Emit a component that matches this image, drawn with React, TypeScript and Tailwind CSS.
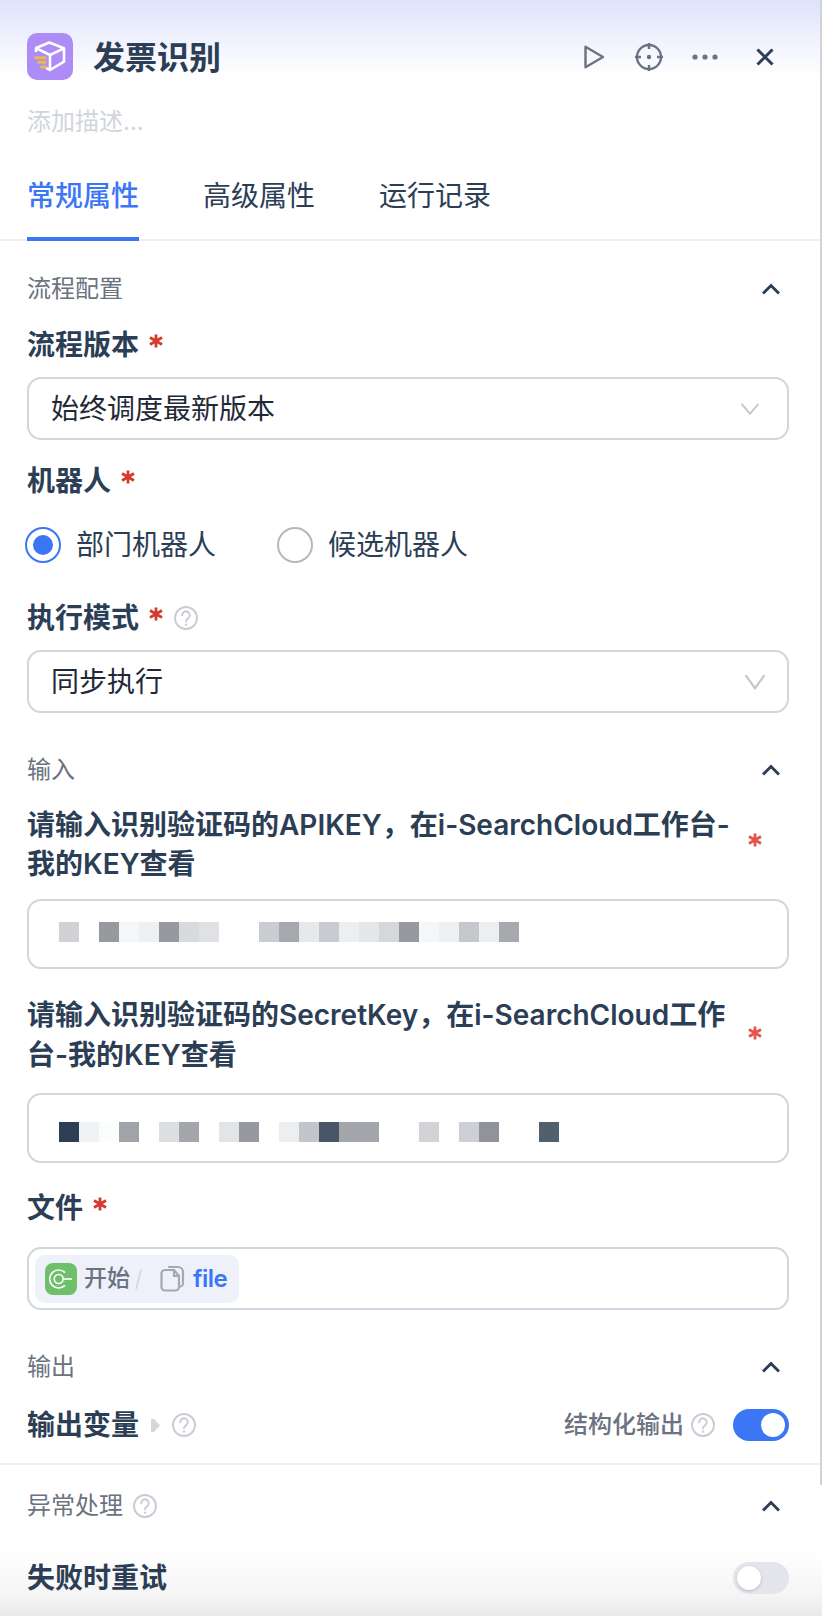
import React from 'react';

const line1 = [
  'bg-[#d0d2d6]', '', 'bg-[#96999e]', 'bg-[#f5f6f7]', 'bg-[#eff0f2]', 'bg-[#97999e]', 'bg-[#d8dadd]', 'bg-[#dfe1e4]', '', '',
  'bg-[#c9ccd0]', 'bg-[#a5a9ae]', 'bg-[#e6e8ea]', 'bg-[#c8cbcf]', 'bg-[#eceef0]', 'bg-[#e4e6e8]', 'bg-[#d5d7da]', 'bg-[#95989f]',
  'bg-[#f5f6f7]', 'bg-[#eff0f1]', 'bg-[#c4c7cb]', 'bg-[#eceef0]', 'bg-[#a6a9ae]',
];

const line2 = [
  'bg-[#2c3e55]', 'bg-[#f1f2f4]', 'bg-[#fcfdfd]', 'bg-[#a0a3a8]', '', 'bg-[#dcdee1]', 'bg-[#a3a6ab]', '', 'bg-[#e2e4e6]', 'bg-[#96999f]', '',
  'bg-[#eceef0]', 'bg-[#c2c5ca]', 'bg-[#4a5568]', 'bg-[#a3a6ab]', 'bg-[#a3a6ab]', '', '', 'bg-[#d1d3d6]', '', 'bg-[#cccfd3]', 'bg-[#90939a]', '', '',
  'bg-[#525f6d]',
];

const Help = ({ className = 'w-6 h-6' }: { className?: string }) => (
  <svg viewBox="0 0 24 24" fill="none" stroke="#c9ccd4" strokeWidth="1.9" className={className}>
    <circle cx="12" cy="12" r="11" />
    <path d="M8.200 9.200a3.800 3.800 0 1 1 5.800 3.200c-1.300.8-2 1.500-2 2.900" strokeLinecap="round" />
    <circle cx="12" cy="18.600" r="1.200" fill="#c9ccd4" stroke="none" />
  </svg>
);

const ChevronUp = () => (
  <svg viewBox="0 0 18 12" fill="none" stroke="#2c3e55" strokeWidth="3" className="w-[18px] h-3 mr-[9px]">
    <path d="M1 10.500 9 2.500l8 8" />
  </svg>
);

const Star = ({ className = 'ml-[10px] -translate-y-1' }: { className?: string }) => (
  <svg viewBox="0 0 14 14" fill="none" stroke="#d5392b" strokeWidth="2.800" className={`w-[14px] h-[14px] ${className}`}>
    <path d="M7 0.500v13M1 3.500l12 7M13 3.500l-12 7" />
  </svg>
);

const SectionHeader = ({ title, help, className }: { title: string; help?: boolean; className: string }) => (
  <div className={`h-10 flex items-center justify-between ${className}`}>
    <div className="flex items-center gap-[10px] text-[24px] text-[#6b7280]">
      {title}
      {help && <Help />}
    </div>
    <ChevronUp />
  </div>
);

const Label = ({ text, className, children }: { text: string; className: string; children?: React.ReactNode }) => (
  <div className={`h-10 flex items-center text-[28px] font-semibold text-[#2c3e55] ${className}`}>
    {text}
    {children}
  </div>
);

const Select = ({ value, wide }: { value: string; wide?: boolean }) => (
  <div className={`mt-3 h-[63px] rounded-[14px] border-2 border-[#d0d5e0] flex items-center justify-between pl-[22px] ${wide ? 'pr-[22px]' : 'pr-[28px]'}`}>
    <span className="text-[28px] text-[#1f2937]">{value}</span>
    <svg viewBox="0 0 18 14" fill="none" stroke="#c4c8d0" strokeWidth="2" className={wide ? 'w-5 h-4' : 'w-[18px] h-3'} preserveAspectRatio="none">
      <path d="M0.500 1 9 12.500 17.500 1" />
    </svg>
  </div>
);

const Masked = ({ cells, className }: { cells: string[]; className: string }) => (
  <div className={`h-[70px] rounded-[14px] border-2 border-[#d0d5e0] pl-[30px] flex ${className}`}>
    {cells.map((c, i) => (
      <div key={i} className={`w-5 h-5 ${c}`}></div>
    ))}
  </div>
);

const Radio = ({ checked, label }: { checked?: boolean; label: string }) => (
  <div className="flex items-center gap-[15px]">
    <div className={`w-9 h-9 rounded-full border-2 flex items-center justify-center ${checked ? 'border-[#3b76f6]' : 'border-[#b4b8c0]'}`}>
      {checked && <div className="w-5 h-5 rounded-full bg-[#3b76f6]"></div>}
    </div>
    <span className="text-[28px] text-[#2c3e55]">{label}</span>
  </div>
);

export default function App() {
  return (
    <div className="relative w-[822px] h-[1616px] overflow-hidden bg-[linear-gradient(180deg,#dfe3fb_0,#ffffff_76px,#ffffff_1550px,#f5f5f5_1595px,#e9e9e9_1616px)] font-['Inter','Noto_Sans_CJK_SC',sans-serif]">
      <div className="absolute top-0 right-0 w-[2px] h-[1485px] bg-[#d2d2d4]"></div>

      <div className="px-[27px] pt-[33px]">
        <div className="h-[47px] flex items-center">
          <svg viewBox="0 0 46 47" fill="none" className="w-[46px] h-[47px]">
            <rect width="46" height="47" rx="10" fill="#ad8cf7" />
            <path d="M9 19v-4L22.300 9.500 37 15.300v13.400L23 37l-4-2.200M9 15.200 23 22l14-6.700M23 22v15" stroke="#fff" strokeWidth="2.600" strokeLinejoin="round" />
            <path d="M7.500 24.700h12M10.500 29.300h9M13.500 34h6" stroke="#eab84e" strokeWidth="3" />
          </svg>
          <span className="ml-[20px] mt-[3px] text-[32px] font-bold text-[#2c3e55]">发票识别</span>
          <div className="ml-auto flex items-center">
            <svg viewBox="0 0 21 24" fill="none" stroke="#6b7280" strokeWidth="2.400" className="w-[21px] h-[24px]">
              <path d="M1.500 1.800v20.400L19 12z" strokeLinejoin="round" />
            </svg>
            <svg viewBox="0 0 28 28" fill="none" stroke="#6b7280" strokeWidth="2.400" className="ml-[30px] w-[28px] h-[28px]">
              <circle cx="14" cy="14" r="12" />
              <path d="M14 0v6M14 22v6M0 14h6M22 14h6" />
              <circle cx="14" cy="14" r="2.200" fill="#6b7280" stroke="none" />
            </svg>
            <svg viewBox="0 0 26 6" fill="#6b7280" className="ml-[29px] w-[26px] h-[6px]">
              <circle cx="3" cy="3" r="2.600" />
              <circle cx="13" cy="3" r="2.600" />
              <circle cx="23" cy="3" r="2.600" />
            </svg>
            <svg viewBox="0 0 18 18" fill="none" stroke="#2c3e55" strokeWidth="3" className="ml-[38px] mr-[21px] w-[18px] h-[18px]">
              <path d="M1.500 1.500l15 15M16.500 1.500l-15 15" />
            </svg>
          </div>
        </div>
        <div className="mt-[26px] h-8 -mb-[2px] flex items-center text-[24px] text-[#d1d5db]">添加描述...</div>
      </div>

      <div className="h-[105px] border-b-2 border-[#f0f0f0] px-[27px] flex items-end gap-[64px] text-[28px] text-[#2c3e55]">
        <div className="h-[105px] -mb-[2px] pt-[39px] border-b-4 border-[#3b76f6] text-[#3b76f6] font-medium">常规属性</div>
        <div className="h-[105px] -mb-[2px] pt-[39px]">高级属性</div>
        <div className="h-[105px] -mb-[2px] pt-[39px]">运行记录</div>
      </div>

      <div className="px-[27px] pr-[33px]">
        <SectionHeader title="流程配置" className="mt-[28px]" />
        <Label text="流程版本" className="mt-[16px]"><Star /></Label>
        <Select value="始终调度最新版本" />
        <Label text="机器人" className="mt-[21px]"><Star /></Label>
        <div className="mt-[23px] -ml-[2px] flex gap-[61px]">
          <Radio checked label="部门机器人" />
          <Radio label="候选机器人" />
        </div>
        <Label text="执行模式" className="mt-[32px]">
          <Star />
          <Help className="ml-[11px] w-6 h-6" />
        </Label>
        <Select value="同步执行" wide />

        <SectionHeader title="输入" className="mt-[37px]" />
        <div className="mt-[16px] flex items-center justify-between text-[28px] leading-[39px] font-semibold text-[#2c3e55]">
          <div>请输入识别验证码的APIKEY，在i-SearchCloud工作台-<br />我的KEY查看</div>
          <Star className="mr-[27px] stroke-[#e5534b] -translate-y-[5px]" />
        </div>
        <Masked cells={line1} className="mt-[15px] pt-[21px]" />
        <div className="mt-[26px] flex items-center justify-between text-[28px] leading-10 font-semibold text-[#2c3e55]">
          <div>请输入识别验证码的SecretKey，在i-SearchCloud工作<br />台-我的KEY查看</div>
          <Star className="mr-[27px] stroke-[#e5534b] -translate-y-[2px]" />
        </div>
        <Masked cells={line2} className="mt-[18px] pt-[27px]" />
        <Label text="文件" className="mt-[25px]"><Star /></Label>
        <div className="mt-[19px] h-[63px] rounded-[14px] border-2 border-[#d0d5e0] pl-[6px] flex items-center">
          <div className="h-12 w-[204px] rounded-[10px] bg-[#eef1fa] flex items-center pl-[10px]">
            <svg viewBox="0 0 32 32" fill="none" className="w-8 h-8">
              <rect width="32" height="32" rx="8" fill="#6fbf6b" />
              <path d="M20 9.600a9 9 0 1 0 0 12.800" stroke="#fff" strokeWidth="1.600" />
              <circle cx="13.700" cy="16" r="4.500" stroke="#fff" strokeWidth="1.600" />
              <path d="M18.200 16H27" stroke="#fff" strokeWidth="1.600" />
            </svg>
            <span className="ml-[7px] text-[23px] font-medium text-[#6b7280]">开始</span>
            <svg viewBox="0 0 7 26" fill="none" stroke="#d1d5db" strokeWidth="1.600" className="ml-[5px] w-[7px] h-[26px]">
              <path d="M6 4 1 23" />
            </svg>
            <svg viewBox="0 0 25 27" fill="none" stroke="#a3a9b5" strokeWidth="2.200" className="ml-[18px] w-[25px] h-[27px]">
              <path d="M9 2h9a5 5 0 0 1 5 5v11a4 4 0 0 1-4 4" strokeLinecap="round" />
              <path d="M5 5h9l5 6v11a3.500 3.500 0 0 1-3.500 3.500H5A3.500 3.500 0 0 1 1.500 22V8.500A3.500 3.500 0 0 1 5 5z" />
              <path d="M14 5v6h5" />
            </svg>
            <span className="ml-[8px] text-[24px] font-semibold tracking-[-0.5px] text-[#3b76f6]">file</span>
          </div>
        </div>

        <SectionHeader title="输出" className="mt-[37px]" />
        <div className="mt-[18px] h-10 flex items-center">
          <span className="text-[28px] font-bold text-[#2c3e55]">输出变量</span>
          <svg viewBox="0 0 9 13" fill="#d3d6dc" className="ml-[12px] w-[9px] h-[13px]">
            <path d="M1 0h2l6 6.500-6 6.500H1a1 1 0 0 1-1-1V1a1 1 0 0 1 1-1z" />
          </svg>
          <Help className="ml-[12px] w-6 h-6" />
          <span className="ml-auto text-[24px] font-medium text-[#6b7280]">结构化输出</span>
          <Help className="ml-[7px] w-6 h-6" />
          <div className="ml-[18px] w-14 h-8 rounded-full bg-[#3b76f6] flex items-center justify-end pr-1">
            <div className="w-6 h-6 rounded-full bg-white"></div>
          </div>
        </div>
      </div>

      <div className="mt-[18px] h-[2px] bg-[#f0f0f0]"></div>

      <div className="px-[27px] pr-[33px]">
        <SectionHeader title="异常处理" help className="mt-[21px]" />
        <div className="mt-[32px] h-10 flex items-center justify-between">
          <span className="text-[28px] font-bold text-[#2c3e55]">失败时重试</span>
          <div className="w-14 h-8 rounded-full bg-[#e4e5ec] flex items-center pl-1">
            <div className="w-6 h-6 rounded-full bg-white shadow-[0_1px_3px_rgba(0,0,0,0.2)]"></div>
          </div>
        </div>
      </div>
    </div>
  );
}
